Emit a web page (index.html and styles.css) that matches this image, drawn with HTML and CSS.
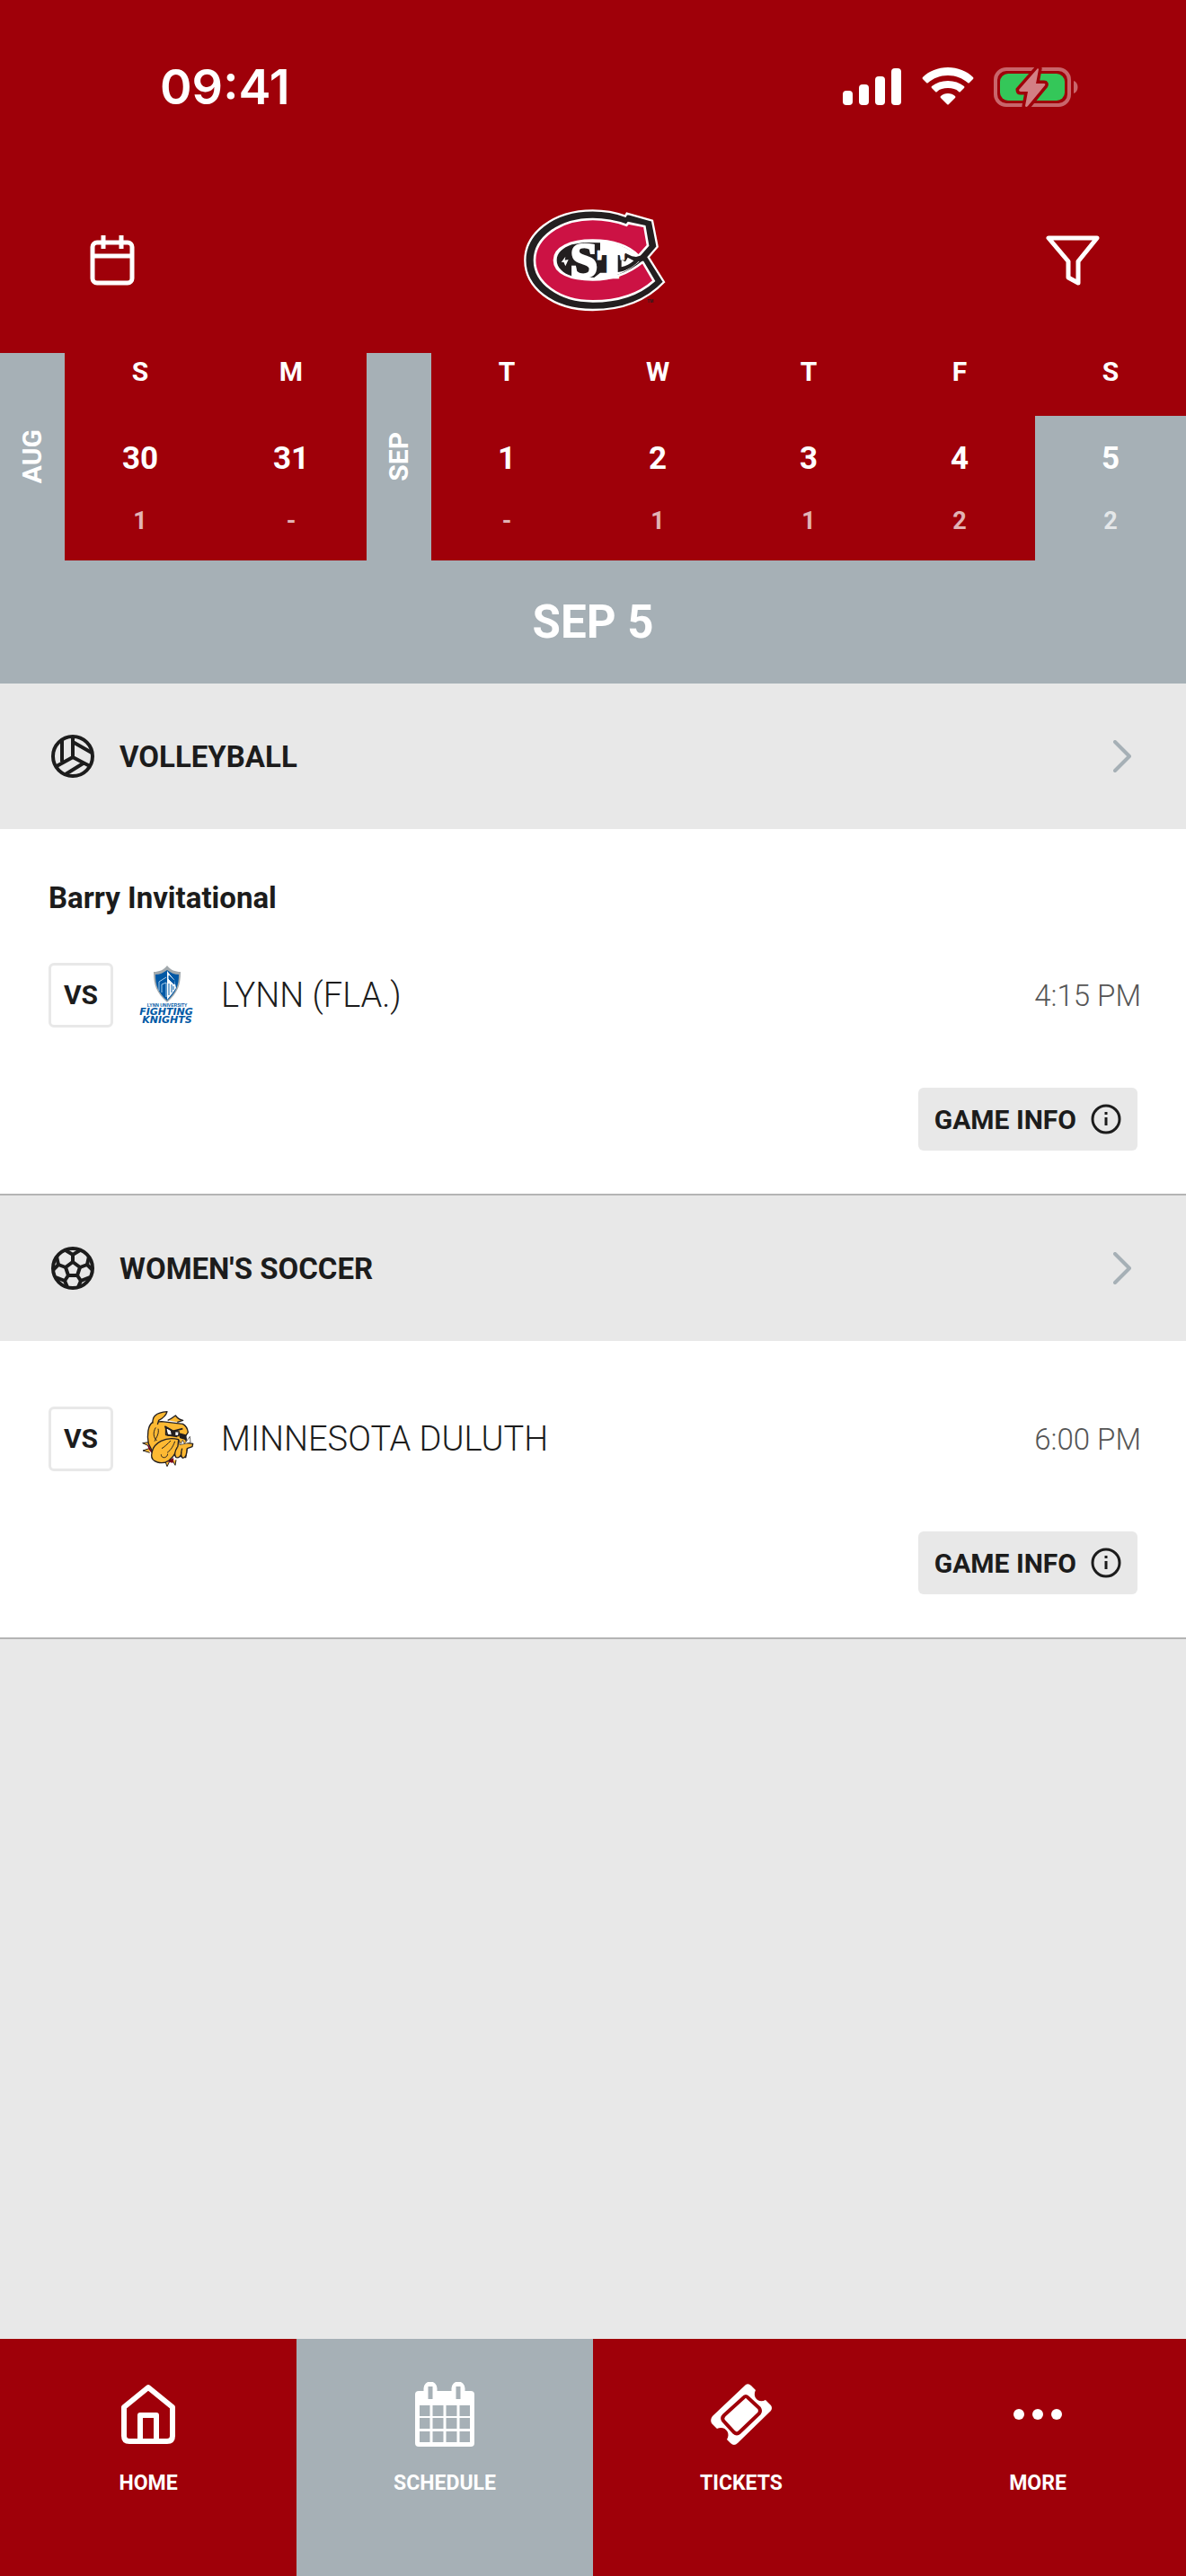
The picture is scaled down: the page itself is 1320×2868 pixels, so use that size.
FILE: index.html
```html
<!DOCTYPE html>
<html lang="en">

<head>
    <meta charset="utf-8">
    <meta name="viewport" content="width=device-width, initial-scale=1">
    <title>Schedule</title>
    <link rel="stylesheet" href="styles.css">
</head>

<body>
    <header class="top">
        <div class="status">
            <span class="time">09:41</span>
            <div class="status-icons">
                <svg width="66" height="46" viewBox="0 0 66 46" fill="#fff">
                    <rect x="0" y="27" width="11" height="16" rx="4" />
                    <rect x="18" y="20" width="11" height="23" rx="4" />
                    <rect x="36" y="11" width="11" height="32" rx="4" />
                    <rect x="54" y="2" width="11" height="41" rx="4" />
                </svg>
                <svg width="58" height="46" viewBox="0 0 58 46" fill="#fff">
                    <path d="M29 1C18 1 8 5 1 12Q0 13 1 14L5 18Q6 19 7 18C13 13 20 10 29 10S45 13 51 18Q52 19 53 18L57 14Q58 13 57 12C50 5 40 1 29 1Z" />
                    <path d="M29 16C22 16 16 18 11 22Q10 23 11 24L15 28Q16 29 17 28C20 25 24 24 29 24S38 25 41 28Q42 29 43 28L47 24Q48 23 47 22C42 18 36 16 29 16Z" />
                    <path d="M21 35Q20 34 21 33C25 29 33 29 37 33Q38 34 37 35L30 42Q29 43 28 42Z" />
                </svg>
                <svg width="94" height="46" viewBox="0 0 94 46">
                    <rect x="2" y="3" width="82" height="40" rx="12" fill="none" stroke="#c9656b" stroke-width="4" />
                    <rect x="7" y="8" width="72" height="30" rx="9" fill="#34c759" />
                    <path d="M89 16C95 18 95 28 89 30Z" fill="#c9656b" />
                    <path class="bolt" d="M49 2L28 26Q28 28 30 28H38L35 44Q36 46 38 44L57 21Q58 19 56 19H47L50 3Z" />
                    <path d="M49 2L28 26Q28 28 30 28H38L35 44Q36 46 38 44L57 21Q58 19 56 19H47L50 3Z" fill="#d37f84" />
                </svg>
            </div>
        </div>

        <div class="toolbar">
            <button class="tool" aria-label="Pick a date">
                <svg width="50" height="56" viewBox="0 0 50 56" fill="none" stroke="#fff" stroke-width="5">
                    <rect x="3" y="8" width="44" height="45" rx="5" />
                    <path d="M3 23H47M15 0V15M35 0V15" />
                </svg>
            </button>

            <!-- school logo -->
            <svg class="logo" width="158" height="114" viewBox="35 38 474 342">
                <path d="M374 61C340 48 300 42 265 42C128 42 39 122 39 208C39 297 128 374 265 374C367 374 445 342 503 281L451 198L481 163L464 76L379 52Z" fill="#231f20" stroke="#fff" stroke-width="7" />
                <path d="M378 91C340 77 302 71 265 71C152 71 71 136 71 208C71 282 152 345 265 345C350 345 416 325 469 277L432 214C388 250 330 273 265 273C190 273 137 250 137 208C137 166 190 142 265 142C330 142 385 160 418 194L449 159L438 95L384 84Z" fill="#cc1244" stroke="#fff" stroke-width="8" />
                <path d="M430 204C385 163 330 143 265 143C192 143 138 167 138 208C138 249 192 272 265 272C330 272 385 248 430 204Z" fill="#fff" />
                <path d="M195 156C165 166 145 185 145 208C145 232 165 251 195 261L270 266L290 250H316V184H290V150L235 149Z" fill="#231f20" />
                <path d="M160 215L174 196L172 208L184 206L174 228L168 214Z" fill="#fff" />
                <path d="M349 248V187L364 198L374 184L396 195L410 197L442 188L446 210L418 212C398 232 374 245 349 248Z" fill="#231f20" />
                <path d="M361 231V207L374 213L382 199L402 210C390 221 376 228 361 231Z" fill="#fff" />
                <text x="236" y="264" class="logo-text" font-size="166" text-anchor="middle">S</text>
                <text x="326" y="266" class="logo-text" font-size="130" text-anchor="middle">T</text>
                <text x="447" y="349" class="logo-tm">TM</text>
            </svg>

            <button class="tool filter" aria-label="Filter">
                <svg width="60" height="56" viewBox="0 0 60 56" fill="none" stroke="#fff" stroke-width="5" stroke-linejoin="round">
                    <path d="M3 3H57L36 29V53L25 47V29Z" />
                </svg>
            </button>
        </div>

        <div class="week">
            <div class="month"><span>AUG</span></div>
            <button class="day"><span class="dow">S</span><span class="cell"><b class="num">30</b><span class="count">1</span></span></button>
            <button class="day"><span class="dow">M</span><span class="cell"><b class="num">31</b><span class="count">-</span></span></button>
            <div class="month"><span>SEP</span></div>
            <button class="day"><span class="dow">T</span><span class="cell"><b class="num">1</b><span class="count">-</span></span></button>
            <button class="day"><span class="dow">W</span><span class="cell"><b class="num">2</b><span class="count">1</span></span></button>
            <button class="day"><span class="dow">T</span><span class="cell"><b class="num">3</b><span class="count">1</span></span></button>
            <button class="day"><span class="dow">F</span><span class="cell"><b class="num">4</b><span class="count">2</span></span></button>
            <button class="day active"><span class="dow">S</span><span class="cell"><b class="num">5</b><span class="count">2</span></span></button>
        </div>
    </header>

    <main>
        <h1 class="date">SEP 5</h1>

        <section>
            <a class="sport" href="#volleyball">
                <svg width="48" height="48" viewBox="0 0 48 48" fill="none" stroke="#1c1c1c" stroke-width="4">
                    <circle cx="24" cy="24" r="22" />
                    <path d="M24 2V25L6 35M24 25L43 35M12 6V30M24 8L45 20M16 44L37 31" />
                </svg>
                <span class="sport-name">VOLLEYBALL</span>
                <svg width="20" height="36" viewBox="0 0 20 36" fill="none" stroke="#a6b0b6" stroke-width="4" stroke-linecap="round" stroke-linejoin="round">
                    <path d="M2 2L18 18L2 34" />
                </svg>
            </a>
            <div class="card">
                <h2 class="event">Barry Invitational</h2>
                <div class="game">
                    <span class="vs">VS</span>
                    <!-- knights -->
                    <svg class="team-logo" width="68" height="68" viewBox="0 0 68 68">
                        <path d="M34 1C30 6 25 8 19 8C19 23 22 31 34 42C46 31 49 23 49 8C43 8 38 6 34 1Z" fill="#a2a9ad" />
                        <path d="M34 6C30 9 26 11 21 11C21 23 24 31 34 40C44 31 47 23 47 11C42 11 38 9 34 6Z" fill="#0058a5" />
                        <path d="M34 7L37 11L42 17L44 26L39 33L34 39Z" fill="#fff" />
                        <path d="M25 29V19L33 14M28 31V22L33 20V36" fill="none" stroke="#a8cbe8" />
                        <path d="M36 12L42 18V22L36 16ZM36 21V34M39 22V31M41 24V28" fill="#0058a5" stroke="#0058a5" />
                        <text class="knights-small" x="34" y="47" text-anchor="middle">LYNN UNIVERSITY</text>
                        <text class="knights" x="33" y="56" text-anchor="middle">FIGHTING</text>
                        <text class="knights" x="34" y="65" text-anchor="middle">KNIGHTS</text>
                    </svg>
                    <span class="opponent">LYNN (FLA.)</span>
                    <span class="start">4:15 PM</span>
                </div>
                <button class="info">GAME INFO
                    <svg width="34" height="34" viewBox="0 0 34 34" fill="none" stroke="#1c1c1c" stroke-width="3">
                        <circle cx="17" cy="17" r="15" />
                        <path d="M17 15V24M17 9V12" />
                    </svg>
                </button>
            </div>
        </section>

        <section>
            <a class="sport" href="#womens-soccer">
                <svg width="48" height="48" viewBox="0 0 48 48" fill="none" stroke="#1c1c1c" stroke-width="4">
                    <circle cx="24" cy="24" r="22" />
                    <path d="M24 17L32 23L29 32H19L16 23Z" />
                    <path d="M24 17V9M32 23L40 20M29 32L33 38M19 32L15 38M16 23L8 20" />
                    <path d="M16 4L24 9L32 4M42 11L40 20L46 26M43 34L33 38L30 45M18 45L15 38L5 34M2 26L8 20L6 11" />
                </svg>
                <span class="sport-name">WOMEN'S SOCCER</span>
                <svg width="20" height="36" viewBox="0 0 20 36" fill="none" stroke="#a6b0b6" stroke-width="4" stroke-linecap="round" stroke-linejoin="round">
                    <path d="M2 2L18 18L2 34" />
                </svg>
            </a>
            <div class="card">
                <div class="game">
                    <span class="vs">VS</span>
                    <!-- bulldog -->
                    <svg class="team-logo" width="68" height="68" viewBox="36 42 204 204" fill="#fdb933" stroke="#231f20" stroke-width="4" stroke-linejoin="round">
                        <!-- collar -->
                        <path d="M76 155L56 158L74 166M78 176L57 183L80 190M132 220L138 236L146 220M156 216L165 232L168 214" stroke-width="3" />
                        <path d="M74 166L88 190L80 180ZM140 218L158 210L156 222Z" fill="#7a0019" stroke="#7a0019" />
                        <!-- head -->
                        <path d="M90 88C74 98 70 130 76 160L88 184L200 206L205 176L222 170L224 160L206 158L196 140L208 122C206 108 198 98 190 94L120 86Z" />
                        <path d="M90 92C88 72 98 56 138 53C134 68 122 76 110 82L106 96" />
                        <path d="M140 82C150 78 158 72 166 66C172 74 180 80 191 82L172 88" />
                        <path d="M132 104L156 118L178 120L176 134L140 132Z" fill="#fff" />
                        <path d="M130 102L158 118L190 110M134 104V130L172 136" fill="none" stroke-width="5" />
                        <path d="M152 118H164V130H154ZM178 126L200 132L202 146L182 140Z" fill="#231f20" />
                        <path d="M178 148L184 160L190 148L196 160L204 150L214 136L216 156L180 164Z" fill="#fff" stroke-width="2" />
                        <!-- jowls -->
                        <path d="M88 186C94 158 132 134 176 146C176 176 164 200 144 216C122 232 84 222 86 198Z" />
                        <path d="M172 172C162 186 162 200 168 206C178 208 184 202 186 190M188 176C184 190 184 204 190 208C200 208 204 200 204 178" />
                        <path d="M118 196C118 210 138 210 140 194M164 152C156 176 144 186 138 190M150 150C140 160 128 172 120 176M100 106C90 122 92 140 104 150M108 110C112 126 102 140 96 152" fill="none" stroke-width="3" />
                    </svg>
                    <span class="opponent">MINNESOTA DULUTH</span>
                    <span class="start">6:00 PM</span>
                </div>
                <button class="info">GAME INFO
                    <svg width="34" height="34" viewBox="0 0 34 34" fill="none" stroke="#1c1c1c" stroke-width="3">
                        <circle cx="17" cy="17" r="15" />
                        <path d="M17 15V24M17 9V12" />
                    </svg>
                </button>
            </div>
        </section>
    </main>

    <nav class="tabs">
        <a class="tab" href="#home">
            <svg width="72" height="72" viewBox="0 0 72 72" fill="none" stroke="#fff" stroke-width="6" stroke-linejoin="round">
                <path d="M9 28L36 6L63 28V60Q63 66 57 66H15Q9 66 9 60Z" />
                <path d="M27 66V37H45V66" />
            </svg>
            HOME
        </a>
        <a class="tab active" href="#schedule">
            <svg width="72" height="72" viewBox="0 0 72 72">
                <rect x="3" y="10" width="66" height="62" rx="4" fill="#fff" />
                <path d="M20 7V17M51 7V17" stroke="#fff" stroke-width="15" stroke-linecap="round" />
                <path d="M20 5V19M51 5V19" stroke="#a6b0b6" stroke-width="5" />
                <path d="M8 32H64M8 46H64M8 61H64" stroke="#a6b0b6" stroke-width="12" />
                <path d="M21 24V68M36 24V68M51 24V68" stroke="#fff" stroke-width="3" />
            </svg>
            SCHEDULE
        </a>
        <a class="tab" href="#tickets">
            <svg width="72" height="72" viewBox="0 0 72 72">
                <path d="M41 3Q44 1 47 4L52 9C48 17 55 24 63 20L69 26Q71 29 69 32L32 68Q28 72 24 68L20 64C25 56 17 48 9 52L3 46Q1 42 4 38Z" fill="#fff" />
                <path d="M38 18Q41 14 44 18L56 29Q58 32 56 35L34 56Q31 59 28 56L16 43Q14 40 17 37Z" fill="none" stroke="#9f0009" stroke-width="4" />
            </svg>
            TICKETS
        </a>
        <a class="tab" href="#more">
            <svg width="72" height="72" viewBox="0 0 72 72" fill="#fff">
                <circle cx="15" cy="36" r="6" />
                <circle cx="36" cy="36" r="6" />
                <circle cx="57" cy="36" r="6" />
            </svg>
            MORE
        </a>
    </nav>
</body>

</html>
```
FILE: styles.css
```css
* {
    box-sizing: border-box;
}

body {
    margin: 0;
    min-height: 100vh;
    display: flex;
    flex-direction: column;
    background: #e8e8e8;
    color: #1c1c1c;
    font-family: Roboto, sans-serif;
}

button {
    border: 0;
    padding: 0;
    background: none;
    color: inherit;
    font: inherit;
}

a {
    color: inherit;
    text-decoration: none;
}

svg {
    display: block;
    flex: none;
}

.top {
    background: #9f0009;
    color: #fff;
}

/* status bar */
.status {
    display: flex;
    justify-content: space-between;
    align-items: center;
    height: 194px;
    padding: 0 120px 0 178px;
}

.time {
    font: 600 54px/60px Inter, sans-serif;
}

.status-icons {
    display: flex;
    gap: 22px;
}

.bolt {
    fill: none;
    stroke: #9f0009;
    stroke-width: 7;
}

.toolbar {
    display: grid;
    grid-template-columns: 1fr auto 1fr;
    align-items: center;
    height: 199px;
    padding: 0 96px 8px 100px;
}

.tool {
    justify-self: start;
}

.filter {
    justify-self: end;
}

.logo-text {
    font-family: "Liberation Serif", serif;
    font-weight: bold;
    fill: #fff;
    stroke: #fff;
    stroke-width: 8;
}

.logo-tm {
    font: bold 14px "Liberation Sans", sans-serif;
    fill: #231f20;
}

/* week strip */
.week {
    display: flex;
}

.month {
    width: 72px;
    display: flex;
    align-items: center;
    justify-content: center;
    background: #a6b0b6;
    font-size: 30px;
    line-height: 40px;
    font-weight: bold;
}

.month span {
    writing-mode: vertical-rl;
    transform: rotate(180deg);
}

.day {
    flex: 1;
    display: flex;
    flex-direction: column;
    gap: 28px;
}

.dow {
    font-size: 30px;
    line-height: 42px;
    font-weight: bold;
    text-align: center;
    width: 100%;
}

.cell {
    width: 100%;
    display: flex;
    flex-direction: column;
    align-items: center;
    gap: 27px;
    padding: 27px 0 23px;
    line-height: 42px;
}

.active .cell {
    background: #a6b0b6;
}

.num {
    font-size: 35px;
}

.count {
    font-size: 27px;
    font-weight: bold;
    opacity: .7;
}

main {
    flex: 1;
}

.date {
    margin: 0;
    background: #a6b0b6;
    color: #fff;
    text-align: center;
    font-size: 51px;
    line-height: 137px;
}

/* games */
.sport {
    display: flex;
    align-items: center;
    gap: 28px;
    height: 162px;
    padding: 0 61px 0 57px;
}

.sport-name {
    flex: 1;
    font-size: 33px;
    font-weight: bold;
}

.card {
    display: flex;
    flex-direction: column;
    padding: 73px 50px 48px 54px;
    background: #fff;
    border-bottom: 2px solid #b4b4b4;
}

.event {
    margin: -18px 0 51px;
    font-size: 33px;
    line-height: 43px;
}

.game {
    display: flex;
    align-items: center;
}

.vs {
    width: 72px;
    border: 3px solid #e8e8e8;
    border-radius: 6px;
    text-align: center;
    font-size: 30px;
    line-height: 66px;
    font-weight: bold;
}

.team-logo {
    margin: 0 26px;
}

.knights {
    font: italic bold 11px "DejaVu Sans", sans-serif;
    fill: #0058a5;
}

.knights-small {
    font: bold 5px "Liberation Sans", sans-serif;
    fill: #0058a5;
}

.opponent {
    flex: 1;
    font-weight: 300;
    font-size: 38px;
}

.start {
    font-weight: 300;
    font-size: 33px;
    color: #555;
}

.info {
    align-self: flex-end;
    display: flex;
    align-items: center;
    gap: 16px;
    height: 70px;
    margin: 67px 4px 0 0;
    padding: 0 18px;
    border-radius: 6px;
    background: #e8e8e8;
    font-size: 30px;
    font-weight: bold;
}

/* bottom tabs */
.tabs {
    display: flex;
    background: #9f0009;
    color: #fff;
}

.tab {
    flex: 1;
    display: flex;
    flex-direction: column;
    align-items: center;
    gap: 24px;
    height: 264px;
    padding-top: 48px;
    font-size: 23px;
    line-height: 34px;
    font-weight: bold;
}

.tab.active {
    background: #a6b0b6;
}
```
